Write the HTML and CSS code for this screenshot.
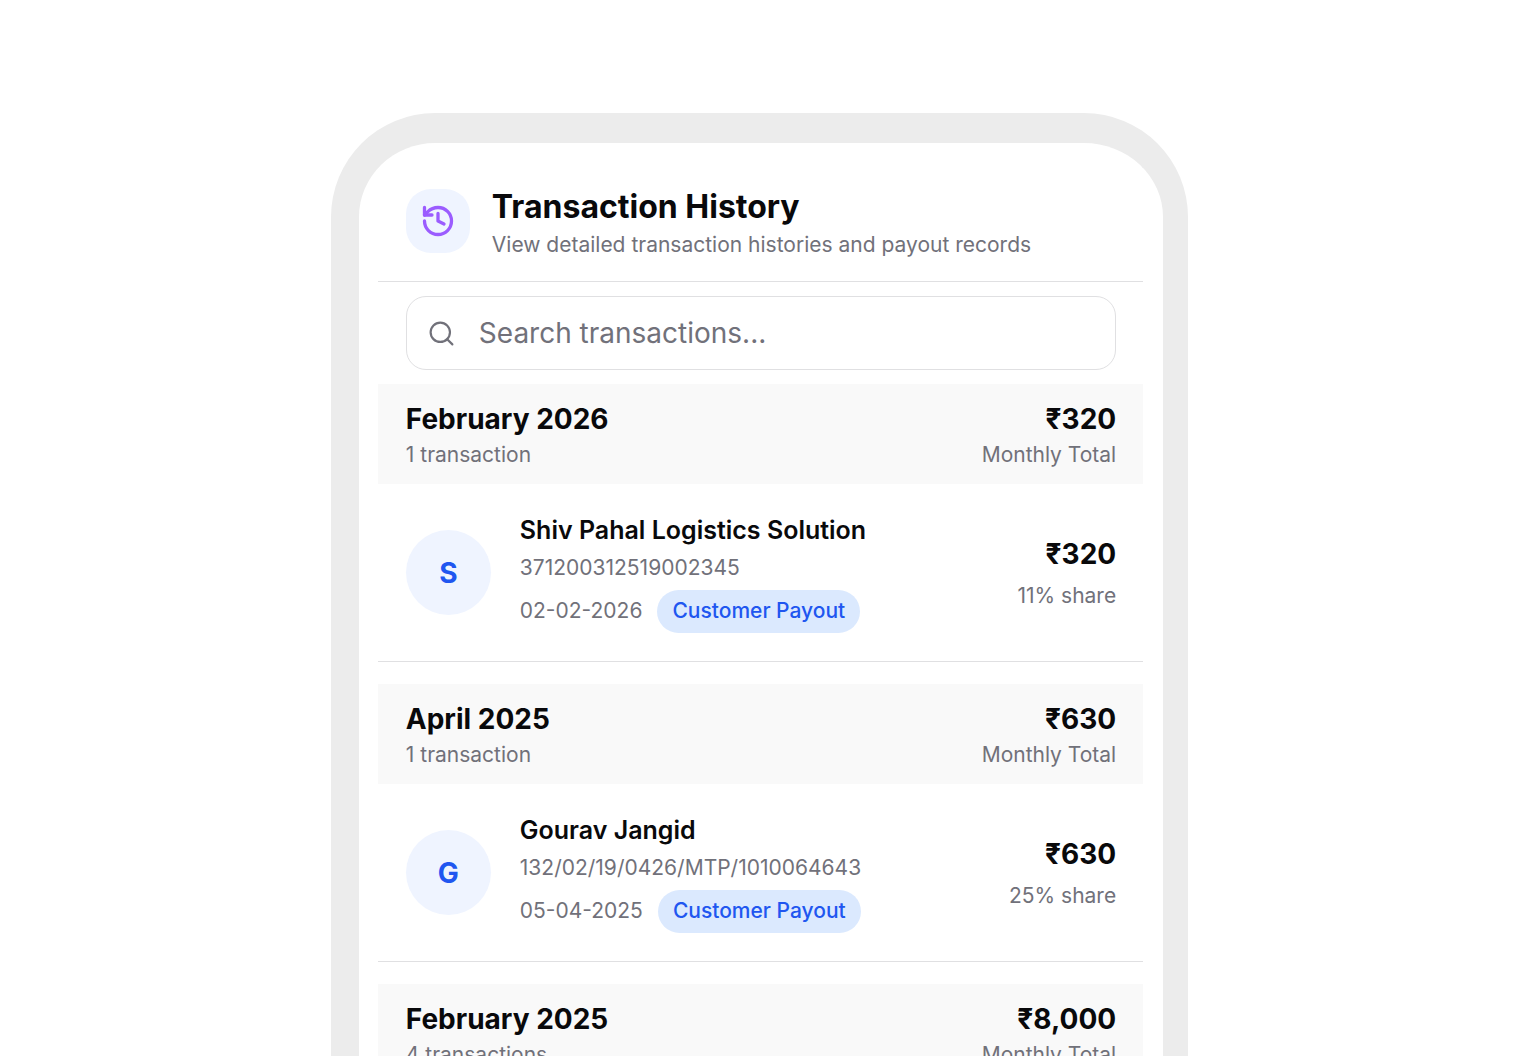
FILE: index.html
```
<!DOCTYPE html>
<html lang="en">
<head>
    <meta charset="UTF-8">
    <meta name="viewport" content="width=device-width, initial-scale=1.0">
    <title>Transaction History</title>
    <link rel="stylesheet" href="styles.css">
</head>
<body>

    <main class="stage">
        <div class="phone">

            <header class="header">
                <div class="header-icon">
                    <svg viewBox="0 0 24 24" aria-hidden="true">
                        <path d="M3 12a9 9 0 1 0 9-9 9.75 9.75 0 0 0-6.74 2.74L3 8"/>
                        <path d="M3 3v5h5"/>
                        <path d="M12 7v5l4 2"/>
                    </svg>
                </div>
                <div>
                    <h1>Transaction History</h1>
                    <p class="muted">View detailed transaction histories and payout records</p>
                </div>
            </header>

            <label class="search">
                <svg viewBox="0 0 24 24" aria-hidden="true">
                    <circle cx="11" cy="11" r="8"/>
                    <path d="m21 21-4.3-4.3"/>
                </svg>
                <input type="text" placeholder="Search transactions..." aria-label="Search transactions">
            </label>

            <section class="month">
                <div class="month-header">
                    <div>
                        <h2>February 2026</h2>
                        <p class="muted">1 transaction</p>
                    </div>
                    <div class="total">
                        <p class="amount">₹320</p>
                        <p class="muted">Monthly Total</p>
                    </div>
                </div>
                <article class="transaction">
                    <div class="avatar">S</div>
                    <div class="details">
                        <h3>Shiv Pahal Logistics Solution</h3>
                        <p class="muted">371200312519002345</p>
                        <div class="meta">
                            <span class="muted">02-02-2026</span>
                            <span class="badge">Customer Payout</span>
                        </div>
                    </div>
                    <div class="share">
                        <p class="amount">₹320</p>
                        <p class="muted">11% share</p>
                    </div>
                </article>
            </section>

            <section class="month">
                <div class="month-header">
                    <div>
                        <h2>April 2025</h2>
                        <p class="muted">1 transaction</p>
                    </div>
                    <div class="total">
                        <p class="amount">₹630</p>
                        <p class="muted">Monthly Total</p>
                    </div>
                </div>
                <article class="transaction">
                    <div class="avatar">G</div>
                    <div class="details">
                        <h3>Gourav Jangid</h3>
                        <p class="muted">132/02/19/0426/MTP/1010064643</p>
                        <div class="meta">
                            <span class="muted">05-04-2025</span>
                            <span class="badge">Customer Payout</span>
                        </div>
                    </div>
                    <div class="share">
                        <p class="amount">₹630</p>
                        <p class="muted">25% share</p>
                    </div>
                </article>
            </section>

            <section class="month">
                <div class="month-header">
                    <div>
                        <h2>February 2025</h2>
                        <p class="muted">4 transactions</p>
                    </div>
                    <div class="total">
                        <p class="amount">₹8,000</p>
                        <p class="muted">Monthly Total</p>
                    </div>
                </div>
            </section>

        </div>
    </main>

</body>
</html>
```

FILE: styles.css
```
* {
    box-sizing: border-box;
    margin: 0;
    padding: 0;
}

body {
    font-family: Inter, sans-serif;
    background-color: #fff;
    color: #09090b;
}

.stage {
    display: flex;
    justify-content: center;
    height: 100vh;
    padding: 113px 12px 0 0;
    overflow: hidden; /* The phone runs off the bottom of the window */
}

/* Phone frame */
.phone {
    width: 56vw;
    min-width: 720px;
    height: max-content;
    min-height: 100%;
    padding: 40px 20px 0 19px;
    border: solid #ececec;
    border-width: 30px 25px 0 28px;
    border-radius: 104px 104px 0 0;
}

.muted {
    font-size: 21px;
    line-height: 28px;
    color: #71717a;
}

/* Header */
.header {
    display: flex;
    align-items: center;
    gap: 22px;
    padding: 0 27px 22px 28px;
    border-bottom: 1px solid #e0e0e2;
}

.header-icon {
    display: flex;
    align-items: center;
    justify-content: center;
    width: 64px;
    height: 64px;
    border-radius: 25px;
    background-color: #eff4ff;
}

.header-icon svg {
    width: 36px;
    height: 36px;
    fill: none;
    stroke: #9b5cff;
    stroke-width: 2.2;
    stroke-linecap: round;
    stroke-linejoin: round;
}

h1 {
    font-size: 32px;
    line-height: 48px;
    font-weight: 700;
}

/* Search */
.search {
    display: flex;
    align-items: center;
    gap: 23px;
    height: 74px;
    margin: 14px 27px 14px 28px;
    padding: 0 20px;
    border: 1px solid #e0e0e2;
    border-radius: 20px;
}

.search svg {
    flex: none;
    width: 29px;
    height: 29px;
    fill: none;
    stroke: #71717a;
    stroke-width: 1.8;
    stroke-linecap: round;
    stroke-linejoin: round;
}

.search input {
    flex: 1;
    border: none;
    outline: none;
    background: none;
    font-family: inherit;
    font-size: 28px;
    color: #09090b;
}

.search input::placeholder {
    color: #71717a;
}

/* Month groups */
.month {
    margin-bottom: 22px;
}

.month-header {
    display: flex;
    justify-content: space-between;
    padding: 14px 27px 15px 28px;
    background-color: #f9f9f9;
}

h2,
.amount {
    font-size: 28px;
    line-height: 43px;
    font-weight: 700;
}

.total,
.share {
    text-align: right;
}

/* Transaction row */
.transaction {
    display: flex;
    align-items: center;
    gap: 29px;
    padding: 28px 27px 28px 28px;
    border-bottom: 1px solid #e0e0e2;
}

.avatar {
    display: flex;
    align-items: center;
    justify-content: center;
    width: 85px;
    height: 85px;
    border-radius: 50%;
    background-color: #eff4ff;
    color: #2056f0;
    font-size: 28px;
    font-weight: 700;
}

.details {
    flex: 1;
}

h3 {
    margin-bottom: 6px;
    font-size: 25px;
    line-height: 36px;
    font-weight: 600;
}

.meta {
    display: flex;
    align-items: baseline;
    gap: 15px;
    margin-top: 8px;
}

.badge {
    padding: 7px 15px 8px;
    border-radius: 22px;
    background-color: #dbe9fe;
    color: #2056f0;
    font-size: 21px;
    line-height: 28px;
    font-weight: 500;
}

.share {
    padding-bottom: 2px;
}

.share .muted {
    margin-top: 6px;
}
```
